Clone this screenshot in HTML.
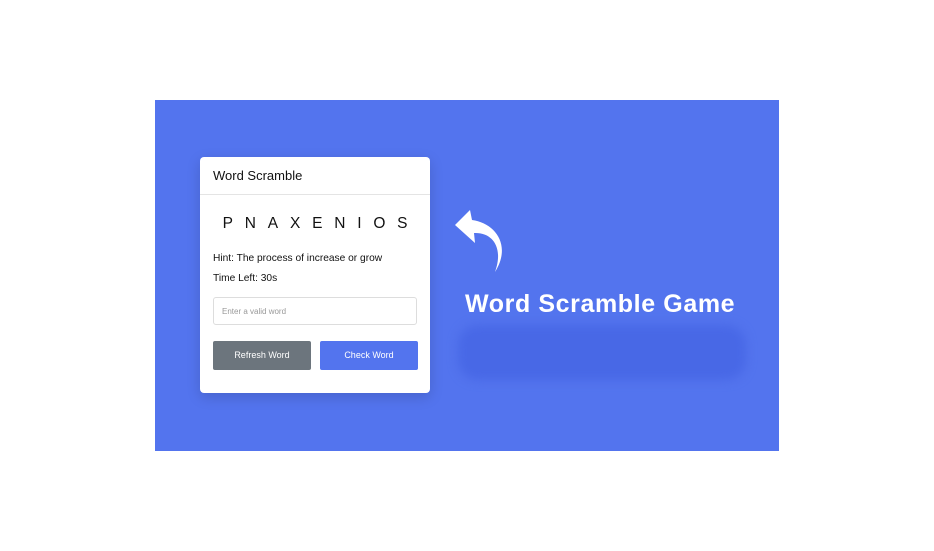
<!DOCTYPE html>
<html><head><style>
body{margin:0;width:934px;height:551px;background:#fff;position:relative;font-family:"Liberation Sans",sans-serif;overflow:hidden}
.bg{position:absolute;left:155px;top:100px;width:624px;height:351px;background:#5374ee}
.card{position:absolute;left:200px;top:157px;width:230px;height:236px;background:#fff;border-radius:4px;box-shadow:0 4px 14px rgba(0,0,0,.15)}
.hd{height:37px;border-bottom:1px solid #e4e4e4;font-size:13px;line-height:38px;padding-left:13px;color:#111}
.word{position:absolute;top:58px;left:0;width:230px;text-align:center;font-size:15.5px;letter-spacing:11.8px;padding-left:12px;box-sizing:border-box;color:#111}
.t{position:absolute;left:13px;font-size:10.2px;color:#111}
.in{position:absolute;left:13px;top:140px;width:204px;height:28px;border:1px solid #ddd;border-radius:3px;box-sizing:border-box;font-size:8px;color:#999;line-height:27px;padding-left:8px}
.b{position:absolute;top:184px;width:98px;height:29px;border-radius:2px;color:#fff;font-size:9px;text-align:center;line-height:29px}
.title{position:absolute;left:465px;top:290px;color:#fff;font-size:25px;font-weight:bold;letter-spacing:0.6px}
.blur{position:absolute;left:458px;top:325px;width:288px;height:55px;background:#4868e6;border-radius:20px;filter:blur(5px)}
</style></head><body>
<div class="bg"></div>
<div class="card">
<div class="hd">Word Scramble</div>
<div class="word">PNAXENIOS</div>
<div class="t" style="top:96px">Hint: The process of increase or grow</div>
<div class="t" style="top:116px">Time Left: 30s</div>
<div class="in">Enter a valid word</div>
<div class="b" style="left:13px;background:#6c757d">Refresh Word</div>
<div class="b" style="left:120px;background:#5374ee">Check Word</div>
</div>
<svg style="position:absolute;left:450px;top:205px" width="65" height="70" viewBox="0 0 65 70">
<path d="M5 20 L20 5 L22 15 C45 18 62 40 45 67 C54 42 42 27 24 28 L25 38 Z" fill="#fff"/>
</svg>
<div class="blur"></div>
<div class="title">Word Scramble Game</div>
</body></html>
